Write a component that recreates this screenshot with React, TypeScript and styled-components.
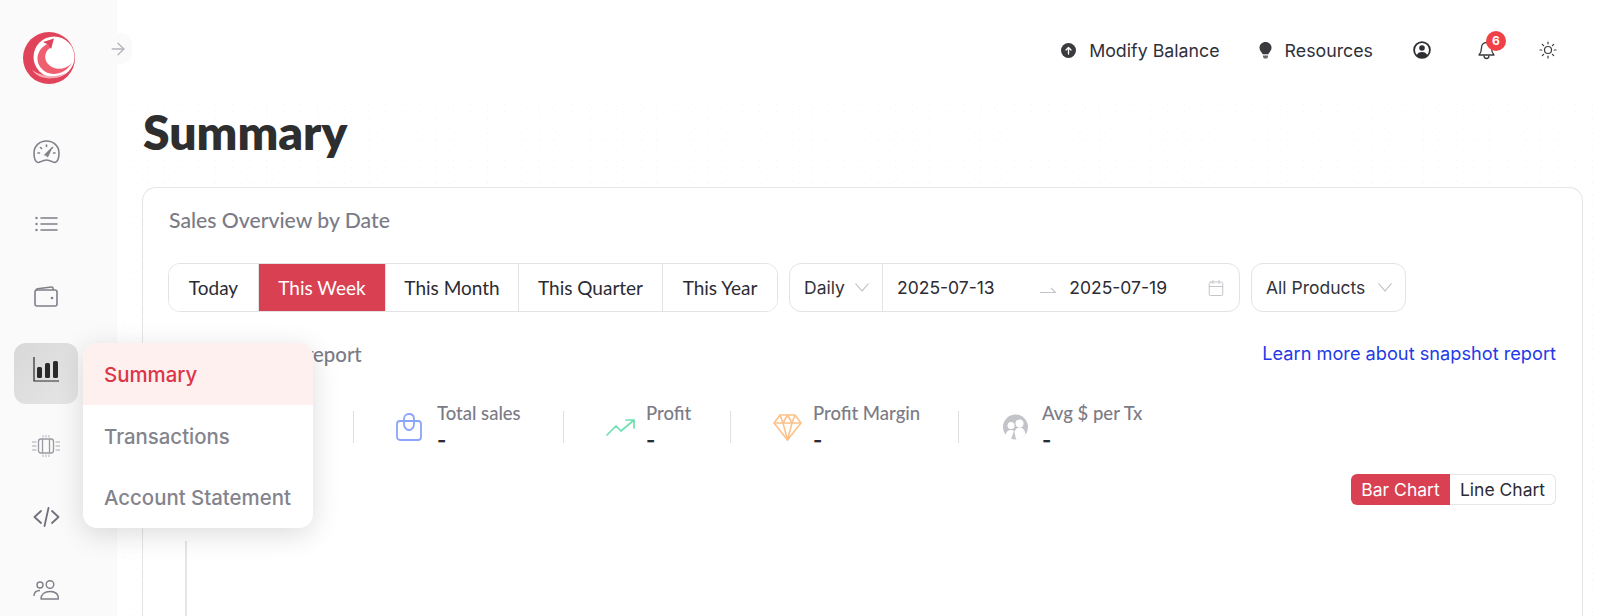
import React from 'react';
import styled, { createGlobalStyle } from 'styled-components';
import { Calendar, ArrowRight } from 'lucide-react';

const GlobalStyle = createGlobalStyle`
  html, body {
    margin: 0;
    padding: 0;
    background: #fff;
  }
  * {
    box-sizing: border-box;
  }
`;

const display = `'Lato', 'Liberation Sans', sans-serif`;
const ui = `'Inter', 'Liberation Sans', sans-serif`;

const Page = styled.div`
  position: relative;
  display: flex;
  width: 1600px;
  height: 616px;
  overflow: hidden;
`;

const Sidebar = styled.aside`
  flex: 0 0 117px;
  display: flex;
  flex-direction: column;
  padding: 32px 0 0 14px;
  background: #fafafa;
`;

const LogoWrap = styled.div`
  width: 52px;
  height: 52px;
  margin: 0 0 37px 9px;
`;

const NavList = styled.nav`
  display: flex;
  flex-direction: column;
  gap: 12px;
`;

const NavItem = styled.div<{ $active?: boolean }>`
  width: 64px;
  height: 61px;
  display: flex;
  align-items: center;
  justify-content: center;
  border-radius: 12px;
  color: #7f8089;
  padding-bottom: ${p => (p.$active ? '9px' : '0')};
  margin: ${p => (p.$active ? '3px 0 -3px' : '0')};
  background: ${p => (p.$active ? 'linear-gradient(135deg, #d8d8d8, #e6e6e6)' : 'transparent')};
`;

const CollapseBtn = styled.div`
  position: absolute;
  left: 104px;
  top: 33px;
  width: 28px;
  height: 31px;
  display: flex;
  align-items: center;
  justify-content: center;
  border-radius: 0 10px 10px 0;
  color: #b4b5bb;
  background: #fafafa;
`;

const Main = styled.main`
  flex: 1;
  min-width: 0;
  display: flex;
  flex-direction: column;
  padding: 0 17px 0 25px;
  background-color: #fff;
  background-image: radial-gradient(#f4f4f4 0.6px, transparent 0.8px),
    radial-gradient(#f6f6f6 0.6px, transparent 0.8px);
  background-size: 13px 11px, 17px 7px;
  background-position: 0 90px, 5px 94px;
`;

const TopBar = styled.header`
  flex: 0 0 100px;
  margin: 0 -17px 0 -25px;
  padding: 0 43px 0 0;
  display: flex;
  align-items: center;
  justify-content: flex-end;
  background: #fff;
`;

const TopLink = styled.a`
  display: flex;
  align-items: center;
  gap: 13px;
  margin-right: 36px;
  font: 400 17.8px ${ui};
  color: #30303a;
  &:first-child {
    margin-right: 39px;
  }
`;

const TopIcon = styled.div<{ $gap?: number }>`
  position: relative;
  display: flex;
  color: #3a3a3f;
  margin-left: ${p => p.$gap ?? 0}px;
`;

const Badge = styled.span`
  position: absolute;
  top: -10px;
  left: 8px;
  width: 20px;
  height: 20px;
  border-radius: 50%;
  background: #ef4146;
  color: #fff;
  font: 700 12px ${ui};
  display: flex;
  align-items: center;
  justify-content: center;
`;

const Title = styled.h1`
  margin: 0 0 0 1px;
  height: 87px;
  font: 800 48px/64px ${display};
  color: #2e2e2e;
`;

const Card = styled.section`
  flex: 1;
  padding: 18px 26px 0 25px;
  border: 1px solid #e6e6e8;
  border-bottom: none;
  border-radius: 14px 14px 0 0;
  background: #fff;
  position: relative;
`;

const CardTitle = styled.h2`
  margin: 0 0 0 1px;
  height: 57px;
  font: 500 21.2px/28px ${display};
  color: #7b7b86;
`;

const Filters = styled.div`
  display: flex;
  gap: 11px;
  height: 49px;
`;

const Segmented = styled.div`
  display: flex;
  border: 1px solid #e3e3e6;
  border-radius: 12px;
  overflow: hidden;
`;

const Tab = styled.div<{ $active?: boolean; $w: number }>`
  width: ${p => p.$w}px;
  display: flex;
  align-items: center;
  justify-content: center;
  font: 400 19px ${display};
  color: ${p => (p.$active ? '#fff' : '#2b2b33')};
  background: ${p => (p.$active ? '#d94153' : '#fff')};
  & + & {
    border-left: 1px solid #e3e3e6;
  }
`;

const SelectCell = styled.div<{ $w: number; $divider?: boolean }>`
  width: ${p => p.$w}px;
  display: flex;
  align-items: center;
  justify-content: space-between;
  padding: 0 13px 0 14px;
  font: 400 17.5px ${ui};
  color: #33333b;
  border-right: ${p => (p.$divider ? '1px solid #e3e3e6' : 'none')};
`;

const DateCell = styled.div<{ $w: number }>`
  width: ${p => p.$w}px;
  display: flex;
  align-items: center;
  padding: 0 14px;
  font: 400 17.5px ${ui};
  color: #2b2b33;
  svg {
    color: #c2c3c8;
  }
`;

const DateArrow = styled.span`
  flex: 1;
  display: flex;
  justify-content: flex-end;
  padding: 4px 13px 0 0;
`;

const DateEnd = styled.span`
  margin-right: 40px;
`;

const SnapshotRow = styled.div`
  display: flex;
  align-items: center;
  justify-content: space-between;
  height: 30px;
  margin-top: 26px;
`;

const SnapshotTitle = styled.h3`
  margin: 1px 0 0 1px;
  font: 500 20.4px ${display};
  color: #7b7b86;
`;

const LearnLink = styled.a`
  font: 400 18.2px ${ui};
  color: #1f3ae6;
`;

const Stats = styled.div`
  display: flex;
  margin: 43px 0 0 185px;
`;

const Stat = styled.div<{ $w: number; $pad: number; $gap: number }>`
  width: ${p => p.$w}px;
  height: 32px;
  padding-left: ${p => p.$pad}px;
  display: flex;
  align-items: center;
  gap: ${p => p.$gap}px;
  border-left: 1px solid #dfdfe2;
`;

const StatText = styled.div`
  display: flex;
  flex-direction: column;
  margin-top: 4px;
`;

const StatLabel = styled.span`
  font: 500 18.5px/22px ${display};
  color: #7b7b86;
  white-space: nowrap;
`;

const StatValue = styled.span`
  font: 700 20px/32px ${ui};
  color: #2b2b33;
`;

const ChartSwitch = styled.div`
  display: flex;
  justify-content: flex-end;
  margin-top: 31px;
`;

const SwitchBtn = styled.div<{ $active?: boolean; $w: number }>`
  width: ${p => p.$w}px;
  height: 31px;
  display: flex;
  align-items: center;
  justify-content: center;
  font: 400 17.5px ${ui};
  color: ${p => (p.$active ? '#fff' : '#2b2b33')};
  background: ${p => (p.$active ? '#d94153' : '#fff')};
  border: ${p => (p.$active ? 'none' : '1px solid #e6e6e8')};
  border-left: none;
  border-radius: ${p => (p.$active ? '6px 0 0 6px' : '0 6px 6px 0')};
`;

const AxisLine = styled.div`
  position: absolute;
  left: 42px;
  top: 353px;
  bottom: 0;
  width: 2px;
  background: #e6e6e8;
`;

const Menu = styled.div`
  position: absolute;
  left: 83px;
  top: 343px;
  width: 230px;
  border-radius: 14px;
  overflow: hidden;
  background: #fff;
  box-shadow: 0 6px 28px rgba(0, 0, 0, 0.14);
`;

const MenuItem = styled.div<{ $active?: boolean }>`
  height: 61.6px;
  display: flex;
  align-items: center;
  padding: 2px 0 0 21px;
  font: 500 20.4px ${ui};
  color: ${p => (p.$active ? '#dc3547' : '#83848d')};
  background: ${p => (p.$active ? '#fdf0ef' : 'transparent')};
`;

const Logo = () => (
  <svg width="52" height="52" viewBox="0 0 52 52">
    <circle cx="26" cy="26" r="26" fill="#e0435a" />
    <circle cx="31" cy="25" r="20.500" fill="#fff" />
    <path d="M27 11C15 15 11 27 18 36c7 9 23 8 31-5-6 7-18 8-24 1-5-6-3-14 4-17z" fill="#ef5f70" />
    <path d="M20 10L31 6.500 28 17l-3-4.500z" fill="#e0435a" />
    <path d="M9 38c6 9 22 12 34 3-10 5-24 4-34-3z" fill="#f7a9b2" />
  </svg>
);

const GaugeIcon = () => (
  <svg width="27" height="24" viewBox="0 0 27 24" fill="none" stroke="currentColor" strokeWidth="1.6" strokeLinecap="round" strokeLinejoin="round">
    <path d="M5 22.500c-2-.4-4-2-4-9.500C1 6 6.500 1 13.500 1S26 6 26 13c0 7.500-2 9-4 9.500-2 .3-4-2.500-8.500-2.500S7 22.800 5 22.500z" />
    <path d="M13.500 5v1.500M7.500 7.500l1 1M5 13h1.500M20.500 13H22M19.500 7.500l-1 1" />
    <path d="M12 15l6-6-3.500 7.500" fill="currentColor" />
  </svg>
);

const ListIcon = () => (
  <svg width="23" height="18" viewBox="0 0 23 18" fill="none" stroke="currentColor" strokeWidth="1.6" strokeLinecap="round">
    <path d="M6 2h16M6 8h16M6 14h16" />
    <circle cx="1.500" cy="2" r="1.200" fill="currentColor" stroke="none" />
    <circle cx="1.500" cy="8" r="1.200" fill="currentColor" stroke="none" />
    <circle cx="1.500" cy="14" r="1.200" fill="currentColor" stroke="none" />
  </svg>
);

const WalletIcon = () => (
  <svg width="24" height="24" viewBox="0 0 24 24" fill="none" stroke="currentColor" strokeWidth="1.6" strokeLinejoin="round">
    <rect x="1" y="4" width="22" height="16" rx="2" />
    <path d="M2 4.500c0-1 .5-1.500 1.500-1.700L17.500 1c1-.1 1.500.5 1.500 1.500V4" />
    <circle cx="18" cy="12" r="1.300" fill="currentColor" stroke="none" />
  </svg>
);

const BarsIcon = () => (
  <svg width="26" height="25" viewBox="0 0 26 25" fill="none">
    <path d="M1 0v24h25" stroke="#2a2a2a" strokeWidth="1.2" />
    <rect x="4" y="10" width="5" height="11" rx="1.500" fill="#2a2a2a" />
    <rect x="12" y="6" width="5" height="15" rx="1.500" fill="#2a2a2a" />
    <rect x="20" y="4" width="5" height="17" rx="1.500" fill="#2a2a2a" />
  </svg>
);

const ChipIcon = () => (
  <svg width="28" height="28" viewBox="0 -4 28 28" fill="none" stroke="#9a9ba2" strokeWidth="1.3">
    <rect x="6.500" y="5" width="15" height="14" rx="2.500" />
    <path d="M10.500 5v14M17.500 5v14" />
    <path d="M11 1v2.500M14 1v2.500M17 1v2.500M11 20.500V23M14 20.500V23M17 20.500V23M0 8h4.500M0 12h4.500M0 16h4.500M23.500 8H28M23.500 12H28M23.500 16H28" stroke="#c4c5ca" />
  </svg>
);

const CodeIcon = () => (
  <svg width="27" height="20" viewBox="0 0 27 20" fill="none" stroke="#6f7079" strokeWidth="1.8" strokeLinecap="round" strokeLinejoin="round">
    <path d="M8 4L1.500 10 8 16M19 4l6.500 6L19 16M15.500 1l-4 18" />
  </svg>
);

const UsersIcon = () => (
  <svg width="26" height="20" viewBox="0 0 26 20" fill="none" stroke="currentColor" strokeWidth="1.4">
    <circle cx="7" cy="5" r="3" />
    <circle cx="17" cy="4.500" r="3.800" />
    <path d="M1 16c0-3.500 2.500-5.500 6-5.500M8 19c0-4.500 3.500-7.500 9-7.500s8.500 3 8.500 7.500z" strokeLinejoin="round" />
  </svg>
);

const UpCircle = () => (
  <svg width="15" height="15" viewBox="0 0 15 15">
    <circle cx="7.500" cy="7.500" r="7.500" fill="#3a3a3f" />
    <path d="M7.500 11V4.500M5 7l2.500-2.500L10 7" stroke="#fff" strokeWidth="1.300" fill="none" strokeLinecap="round" strokeLinejoin="round" />
  </svg>
);

const BulbIcon = () => (
  <svg width="13" height="17" viewBox="0 0 13 17">
    <path d="M6.500 0C3 0 .5 2.500.5 5.800c0 2.300 1.300 3.700 2.300 4.900.4.500.7 1 .7 1.500h6c0-.5.300-1 .7-1.500 1-1.200 2.300-2.600 2.300-4.900C12.500 2.500 10 0 6.500 0z" fill="#3a3a3f" />
    <path d="M4 13.500h5v1.500l-1 1.500H5L4 15z" fill="#6a6a70" />
  </svg>
);

const UserCircle = () => (
  <svg width="18" height="18" viewBox="0 0 18 18" fill="none">
    <circle cx="9" cy="9" r="7.900" stroke="#2e2e33" strokeWidth="1.800" />
    <circle cx="9" cy="7" r="2.800" fill="#2e2e33" />
    <path d="M3.500 14.500c1-2.500 3-3.500 5.500-3.500s4.500 1 5.500 3.500C13 16.300 11 17 9 17s-4-.7-5.500-2.500z" fill="#2e2e33" />
  </svg>
);

const BellIcon = () => (
  <svg width="17" height="19" viewBox="0 0 17 19" fill="none" stroke="#3a3a3f" strokeWidth="1.300" strokeLinejoin="round">
    <path d="M8.500 1.500c-3 0-5 2.300-5 5.200 0 3.800-.8 5.300-2.500 7.300h15c-1.700-2-2.500-3.500-2.500-7.300 0-2.900-2-5.200-5-5.200z" />
    <path d="M6 14.500c0 2 1 3 2.500 3s2.500-1 2.500-3" />
  </svg>
);

const SunIcon = () => (
  <svg width="18" height="18" viewBox="0 0 18 18" fill="none" stroke="#3a3a3f" strokeWidth="1.200" strokeLinecap="round">
    <circle cx="9" cy="9" r="3.500" />
    <path d="M9 1v1.800M9 15.200V17M1 9h1.800M15.200 9H17M3.300 3.300l1.300 1.300M13.400 13.400l1.300 1.300M3.300 14.700l1.300-1.300M13.400 4.600l1.300-1.300" />
  </svg>
);

const Chevron = () => (
  <svg width="14" height="9" viewBox="0 0 14 9" fill="none" stroke="#b9bac0" strokeWidth="1.100">
    <path d="M.5.500L7 8l6.500-7.500" />
  </svg>
);

const HalfArrow = () => (
  <svg width="16" height="6" viewBox="0 0 16 6" fill="none" stroke="#c2c3c8" strokeWidth="1.100">
    <path d="M0 5.500h15.500L11 1" />
  </svg>
);

const BagIcon = () => (
  <svg width="26" height="28" viewBox="0 0 26 28" fill="none" stroke="#8aa5fb" strokeWidth="1.800" strokeLinejoin="round" strokeLinecap="round">
    <rect x="1" y="8" width="24" height="19" rx="3" />
    <path d="M8 8V6c0-3 2-5 5-5s5 2 5 5v5c0 3-2 6-5 6s-5-3-5-6z" />
  </svg>
);

const TrendIcon = () => (
  <svg width="29" height="17" viewBox="0 0 29 17" fill="none" stroke="#6fe0b0" strokeWidth="1.700" strokeLinecap="round" strokeLinejoin="round">
    <path d="M1 16l9-9 5 5L28 1M20 1h8v8" />
  </svg>
);

const DiamondIcon = () => (
  <svg width="29" height="27" viewBox="0 0 29 27" fill="none" stroke="#fdc189" strokeWidth="1.600" strokeLinejoin="round">
    <path d="M7 1h15l6 8-13.500 17L1 9z" />
    <path d="M1 9h27M7 1l3 8 4.500 17L19 9l3-8M10 9l4.500-8L19 9" />
  </svg>
);

const AvgIcon = () => (
  <svg width="25" height="26" viewBox="0 0 25 26">
    <circle cx="12.500" cy="13" r="12.500" fill="#c3c4c9" />
    <circle cx="8" cy="11.500" r="3.500" fill="#fff" />
    <circle cx="16.500" cy="9.500" r="4" fill="#fff" />
    <path d="M2.500 21c.5-3 2.500-5 5.500-5 1.300 0 2.300.4 3 1l-3 8.200C5.500 24.500 3.800 23 2.500 21z" fill="#fff" />
    <path d="M11.500 18c1-3 2.800-4.500 5-4.500 3 0 5.500 2.500 6 7-2 3-5.500 5-9.500 5z" fill="#fff" />
  </svg>
);

const navIcons = [
  { key: 'gauge', icon: <GaugeIcon /> },
  { key: 'list', icon: <ListIcon /> },
  { key: 'wallet', icon: <WalletIcon /> },
  { key: 'bars', icon: <BarsIcon />, active: true },
  { key: 'chip', icon: <ChipIcon /> },
  { key: 'code', icon: <CodeIcon /> },
  { key: 'users', icon: <UsersIcon /> },
];

const tabs = [
  { label: 'Today', w: 89 },
  { label: 'This Week', w: 127, active: true },
  { label: 'This Month', w: 133 },
  { label: 'This Quarter', w: 144 },
  { label: 'This Year', w: 115 },
];

const stats = [
  { label: 'Total sales', icon: <BagIcon />, w: 210, pad: 42, gap: 15 },
  { label: 'Profit', icon: <TrendIcon />, w: 167, pad: 42, gap: 11 },
  { label: 'Profit Margin', icon: <DiamondIcon />, w: 228, pad: 42, gap: 11 },
  { label: 'Avg $ per Tx', icon: <AvgIcon />, w: 220, pad: 44, gap: 14 },
];

export default function App() {
  return (
    <Page>
      <GlobalStyle />
      <Sidebar>
        <LogoWrap>
          <Logo />
        </LogoWrap>
        <NavList>
          {navIcons.map(n => (
            <NavItem key={n.key} $active={n.active}>
              {n.icon}
            </NavItem>
          ))}
        </NavList>
      </Sidebar>
      <CollapseBtn>
        <ArrowRight size={20} strokeWidth={1.6} />
      </CollapseBtn>
      <Main>
        <TopBar>
          <TopLink>
            <UpCircle />
            Modify Balance
          </TopLink>
          <TopLink>
            <BulbIcon />
            Resources
          </TopLink>
          <TopIcon $gap={4}>
            <UserCircle />
          </TopIcon>
          <TopIcon $gap={47}>
            <BellIcon />
            <Badge>6</Badge>
          </TopIcon>
          <TopIcon $gap={44}>
            <SunIcon />
          </TopIcon>
        </TopBar>
        <Title>Summary</Title>
        <Card>
          <CardTitle>Sales Overview by Date</CardTitle>
          <Filters>
            <Segmented>
              {tabs.map(t => (
                <Tab key={t.label} $active={t.active} $w={t.w}>
                  {t.label}
                </Tab>
              ))}
            </Segmented>
            <Segmented>
              <SelectCell $w={93} $divider>
                Daily
                <Chevron />
              </SelectCell>
              <DateCell $w={356}>
                2025-07-13
                <DateArrow>
                  <HalfArrow />
                </DateArrow>
                <DateEnd>2025-07-19</DateEnd>
                <Calendar size={18} strokeWidth={1.3} />
              </DateCell>
            </Segmented>
            <Segmented>
              <SelectCell $w={153}>
                All Products
                <Chevron />
              </SelectCell>
            </Segmented>
          </Filters>
          <SnapshotRow>
            <SnapshotTitle>Sales snapshot report</SnapshotTitle>
            <LearnLink>Learn more about snapshot report</LearnLink>
          </SnapshotRow>
          <Stats>
            {stats.map(s => (
              <Stat key={s.label} $w={s.w} $pad={s.pad} $gap={s.gap}>
                {s.icon}
                <StatText>
                  <StatLabel>{s.label}</StatLabel>
                  <StatValue>-</StatValue>
                </StatText>
              </Stat>
            ))}
          </Stats>
          <ChartSwitch>
            <SwitchBtn $active $w={99}>Bar Chart</SwitchBtn>
            <SwitchBtn $w={106}>Line Chart</SwitchBtn>
          </ChartSwitch>
          <AxisLine />
        </Card>
      </Main>
      <Menu>
        <MenuItem $active>Summary</MenuItem>
        <MenuItem>Transactions</MenuItem>
        <MenuItem>Account Statement</MenuItem>
      </Menu>
    </Page>
  );
}
